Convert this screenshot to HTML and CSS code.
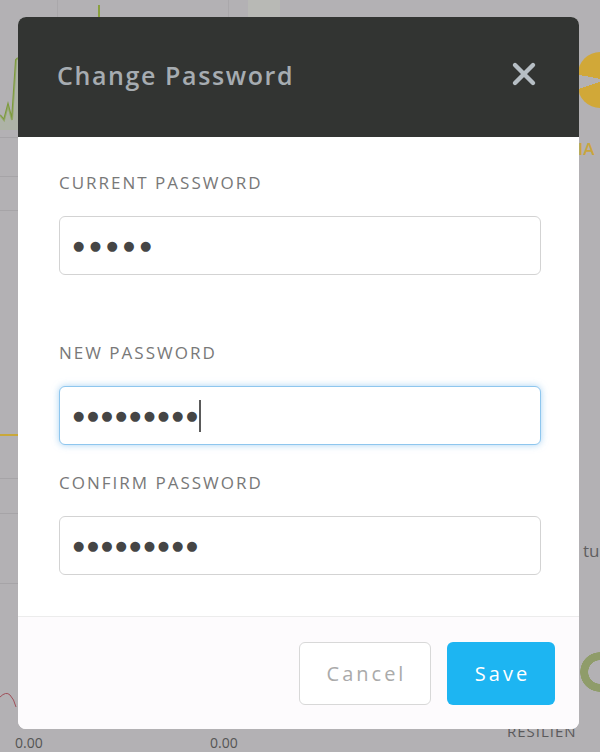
FILE: index.html
```html
<!DOCTYPE html>
<html lang="en">
<head>
<meta charset="utf-8">
<title>Change Password</title>
<link rel="stylesheet" href="styles.css">
</head>
<body>
<div class="backdrop" aria-hidden="true">
  <div class="vline v1"></div>
  <div class="vline v2"></div>
  <div class="band"></div>
  <div class="hline h1"></div>
  <div class="hline h2"></div>
  <div class="hline h3"></div>
  <div class="hline h4"></div>
  <div class="hline h5"></div>
  <div class="hline h6"></div>
  <div class="yline"></div>
  <svg class="chart" width="18" height="110" viewBox="0 0 18 110">
    <path d="M0 95 L4 100 L8 85 L12 100 L16 40 L18 38" fill="none" stroke="#7d9a3c" stroke-width="2"/>
    <path d="M0 95 L4 100 L8 85 L12 100 L16 40 L18 38 L18 115 L0 115 Z" fill="#a9b59a" opacity="0.5"/>
  </svg>
  <div class="spike"></div>
  <div class="pie"></div>
  <span class="bgtext t-ia">IA</span>
  <span class="bgtext t-tu">tu</span>
  <span class="bgtext t-res">RESILIEN</span>
  <span class="bgtext t-z1">0.00</span>
  <span class="bgtext t-z2">0.00</span>
  <div class="ring"></div>
  <svg class="redline" width="18" height="30" viewBox="0 0 18 30">
    <path d="M0 12 Q6 6 10 10 T16 22" fill="none" stroke="#a0505a" stroke-width="1"/>
  </svg>
</div>

<div class="modal" role="dialog" aria-labelledby="title">
  <header class="modal-header">
    <h1 id="title" class="modal-title">Change Password</h1>
    <button class="close" type="button" aria-label="Close">
      <svg width="26" height="26" viewBox="0 0 26 26">
        <path d="M4 4 L22 22 M22 4 L4 22" stroke="#b6bec4" stroke-width="4.4" stroke-linecap="round"/>
      </svg>
    </button>
  </header>
  <div class="modal-body">
    <div class="group first">
      <label class="label">CURRENT PASSWORD</label>
      <div class="field"><span class="dots wide">●●●●●</span></div>
    </div>
    <div class="group">
      <label class="label">NEW PASSWORD</label>
      <div class="field focused"><span class="dots">●●●●●●●●●</span><span class="caret"></span></div>
    </div>
    <div class="group">
      <label class="label">CONFIRM PASSWORD</label>
      <div class="field"><span class="dots">●●●●●●●●●</span></div>
    </div>
  </div>
  <footer class="modal-footer">
    <button class="btn btn-cancel" type="button">Cancel</button>
    <button class="btn btn-save" type="button">Save</button>
  </footer>
</div>
</body>
</html>
```

FILE: styles.css
```css
* { box-sizing: border-box; }
html, body { margin: 0; padding: 0; }
body {
  width: 600px;
  height: 752px;
  overflow: hidden;
  background: #b3b1b4;
  font-family: "Open Sans", "DejaVu Sans", sans-serif;
  position: relative;
  padding: 17px 0 0 18px;
}

/* obscured dashboard behind the overlay */
.backdrop { position: absolute; inset: 0; z-index: 0; overflow: hidden; }
.vline { position: absolute; top: 0; width: 1px; background: #aaa8ab; }
.v1 { left: 57px; height: 17px; }
.v2 { left: 228px; height: 17px; }
.band { position: absolute; left: 248px; top: 0; width: 32px; height: 17px; background: #b8b9b5; }
.hline { position: absolute; height: 1px; background: #a6a4a7; }
.h1 { left: 0; top: 137px; width: 18px; }
.h2 { left: 0; top: 176px; width: 18px; }
.h3 { left: 0; top: 210px; width: 18px; }
.h4 { left: 0; top: 478px; width: 18px; }
.h5 { left: 0; top: 513px; width: 18px; }
.h6 { left: 0; top: 583px; width: 18px; }
.yline { position: absolute; left: 0; top: 434px; width: 18px; height: 2px; background: #c9a83a; }
.chart { position: absolute; left: 0; top: 20px; }
.spike { position: absolute; left: 98px; top: 5px; width: 2px; height: 12px; background: #8aa040; }
.pie {
  position: absolute; left: 578px; top: 52px; width: 22px; height: 56px;
  border-radius: 28px 0 0 28px;
  background: conic-gradient(at 28px 28px, #d1a838 0 70%, #b3b1b4 70% 78%, #d1a838 78%);
}
.ring {
  position: absolute; left: 580px; top: 652px; width: 20px; height: 40px;
  background: radial-gradient(circle at 20px 20px, transparent 11.5px, #8f9c6a 12px, #8f9c6a 19.5px, transparent 20px);
}
.redline { position: absolute; left: 0; top: 685px; }
.bgtext { position: absolute; font-family: "Open Sans", sans-serif; color: #6a686b; font-size: 17px; line-height: 1; white-space: nowrap; }
.t-ia { left: 578px; top: 140px; color: #c9a53d; font-weight: 600; }
.t-tu { left: 583px; top: 542px; color: #5f5e60; }
.t-res { left: 507px; top: 724px; font-size: 15px; letter-spacing: 1px; color: #5a595b; }
.t-z1 { left: 15px; top: 736px; font-size: 14px; color: #555; }
.t-z2 { left: 210px; top: 736px; font-size: 14px; color: #555; }

/* modal */
.modal {
  position: relative;
  z-index: 1;
  width: 561px;
  border-radius: 8px;
  overflow: hidden;
  background: #fff;
}
.modal-header {
  height: 120px;
  background: #323432;
  display: flex;
  align-items: center;
  justify-content: space-between;
  padding: 0 42px 0 39px;
}
.modal-title {
  margin: 0;
  font-family: "Open Sans", sans-serif;
  font-weight: 600;
  font-size: 25px;
  letter-spacing: 1.6px;
  color: #a6acb1;
  line-height: 1;
  position: relative;
  top: -2px;
}
.close {
  border: 0;
  background: none;
  padding: 0;
  width: 26px;
  height: 26px;
  display: flex;
  position: relative;
  top: -3px;
}

.modal-body {
  padding: 36px 38px 41px 41px;
  border-bottom: 1px solid #ececec;
}
.group { display: flex; flex-direction: column; margin-top: 28px; }
.group.first { margin-top: 0; margin-bottom: 68px; }
.label {
  font-size: 17px;
  line-height: 20px;
  letter-spacing: 2px;
  color: #787878;
  margin-bottom: 23px;
}
.field {
  height: 59px;
  border: 1px solid #d3d3d3;
  border-radius: 6px;
  display: flex;
  align-items: center;
  padding: 0 13px;
  background: #fff;
}
.field.focused {
  border-color: #8ec6ee;
  box-shadow: 0 0 7px rgba(110, 180, 235, 0.6);
}
.dots {
  font-family: "DejaVu Sans", sans-serif;
  font-size: 13px;
  letter-spacing: 2.8px;
  color: #454545;
  line-height: 1;
}
.dots.wide { letter-spacing: 5.4px; }
.caret {
  width: 2px;
  height: 32px;
  background: #5a5a5a;
  margin-left: -1px;
}

.modal-footer {
  background: #fdfbfd;
  display: flex;
  justify-content: flex-end;
  gap: 16px;
  padding: 25px 24px 24px;
}
.btn {
  height: 63px;
  border-radius: 6px;
  font-family: "Open Sans", sans-serif;
  font-size: 20px;
  letter-spacing: 3px;
  cursor: pointer;
  padding: 0 0 0 3px;
}
.btn-cancel {
  width: 132px;
  border: 1px solid #d8d8d8;
  background: #fff;
  color: #aaaaaa;
}
.btn-save {
  width: 108px;
  border: 0;
  background: #1db5f2;
  color: #fff;
}
```
